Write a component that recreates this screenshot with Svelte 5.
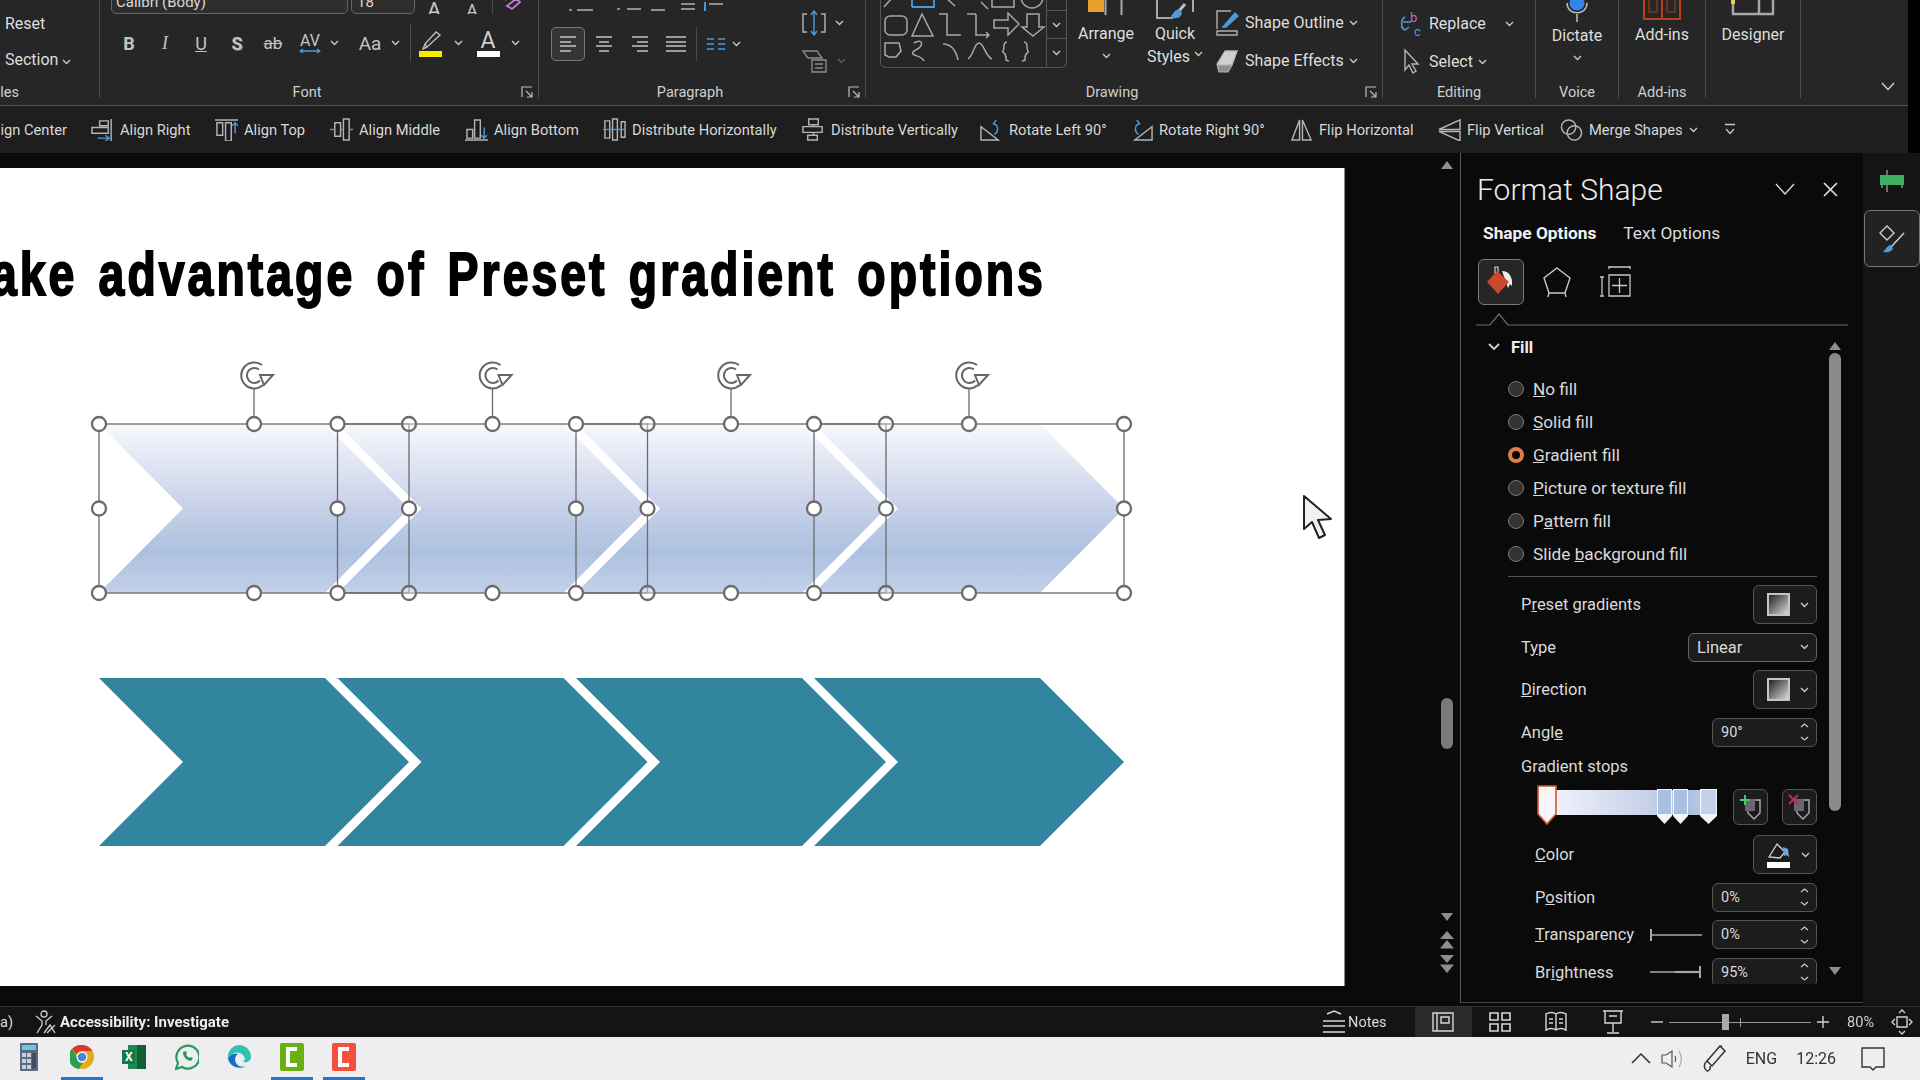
<script lang="ts">
	const g = '#b4b4b4';
	const b = '#4b9bdc';

	// x of each item's icon is the width of the item before it
	const qatItems = [
		{ label: 'Align Right', width: 124, icon: [['M9 3h9v5H9zM1 10h17v6H1zM21 1v23', g], ['M7 21h12m-4-3 4 3-4 3', b]] },
		{ label: 'Align Top', width: 115, icon: [['M0 2h24M2 5h6v13H2zM11 5h6v19h-6z', g], ['M21 16V5m-3 3 3-3 3 3', b]] },
		{ label: 'Align Middle', width: 135, icon: [['M5 5h6v14H5zM14 1h6v22h-6z', g], ['M0 12h5M11 12h3M20 12h4', b]] },
		{ label: 'Align Bottom', width: 138, icon: [['M0 23h24M2 12h6v9H2zM10 2h6v19h-6z', g], ['M20 10v11m-3-3 3 3 3-3', b]] },
		{ label: 'Distribute Horizontally', width: 199, icon: [['M2 3h5v18H2zM10 1h5v22h-5zM19 4h4v16h-4z', g], ['M0 12h24', b]] },
		{ label: 'Distribute Vertically', width: 178, icon: [['M7 1h10v6H7zM1 9h20v6H1zM6 18h10v5H6zM12 7v2M12 15v3', g]] },
		{ label: 'Rotate Left 90°', width: 150, icon: [['M1 23V9l18 14z', g], ['M15 17c4-2 5-8 0-11h-1m3-4-3 4 4 2', b]] },
		{ label: 'Rotate Right 90°', width: 160, icon: [['M23 23V9L5 23z', g], ['M9 17C5 15 4 9 9 6h1M7 2l3 4-4 2', b]] },
		{ label: 'Flip Horizontal', width: 148, icon: [['M10 2v21H2zM13 2v21h9z', g]] },
		{ label: 'Flip Vertical', width: 122, icon: [['M23 2v10H1zM23 14v10L1 14z', g]] },
		{ label: 'Merge Shapes', width: 164, chevron: true, icon: [['M9 2a7.500 7.500 0 1 1 0 15 7.500 7.500 0 0 1 0-15zM15 8a7.500 7.500 0 1 1 0 15 7.500 7.500 0 0 1 0-15z', g]] },
	];

	const fills = ['No fill', 'Solid fill', 'Gradient fill', 'Picture or texture fill', 'Pattern fill', 'Slide background fill'];
	// index of the access key letter in each label
	const fillKeys = [0, 0, 0, 0, 1, 6];

	const stops = [
		{ x: 120, w: 15, c: '#a8c0e2' },
		{ x: 136, w: 15, c: '#a8c0e2' },
		{ x: 163, w: 17, c: '#c3d2ea' },
	];

	const chevrons = [99, 337.5, 576, 814];
	const shapeW = 310;
	const depth = 84;

	function chevronPoints(x: number, y: number, h: number) {
		const r = x + shapeW;
		return `${x},${y} ${r - depth},${y} ${r},${y + h / 2} ${r - depth},${y + h} ${x},${y + h} ${x + depth},${y + h / 2}`;
	}

	const handleXs = [0, 155, 310];
</script>

{#snippet icon(paths: string[][], size = 23)}
	<svg class="ico" width={size} height={size} viewBox="0 0 24 24" fill="none" stroke-width="1.5">
		{#each paths as p}<path d={p[0]} stroke={p[1]} />{/each}
	</svg>
{/snippet}

{#snippet chev(w = 9)}
	<svg class="chev" width={w} height="6" viewBox="0 0 9 6" fill="none"><path d="M1 1l3.500 3.500L8 1" stroke="#c8c8c8" stroke-width="1.4" /></svg>
{/snippet}

{#snippet launcher()}
	<svg class="launcher" width="12" height="12" viewBox="0 0 12 12" fill="none" stroke="#bdbdbd" stroke-width="1.2"><path d="M1 11V1h10M5 5l6 6M11 6v5H6" /></svg>
{/snippet}

{#snippet spin(value: string)}
	<div class="spin">
		<span>{value}</span>
		<svg width="9" height="20" viewBox="0 0 9 20" fill="none" stroke="#c8c8c8" stroke-width="1.2"><path d="M1 5l3.500-3L8 5M1 15l3.500 3L8 15" /></svg>
	</div>
{/snippet}

{#snippet swatchBtn()}
	<div class="swatch-btn"><i class="swatch"></i>{@render chev()}</div>
{/snippet}

<div class="screen">
	<header class="ribbon">
		<section class="group g-slides">
			<div class="stack">
				<div class="t">Reset</div>
				<div class="t">Section {@render chev()}</div>
			</div>
			<div class="glabel clipped">Styles</div>
		</section>

		<section class="group g-font">
			<div class="font-row1">
				<div class="combo font-name">Calibri (Body)</div>
				<div class="combo font-size">18</div>
				<span class="grow">A</span>
				<span class="grow shrink">A</span>
				<i class="vsep"></i>
				<svg width="24" height="24" viewBox="0 0 24 24" fill="none" stroke="#c77ad6" stroke-width="1.8"><path d="M5 10l12-9M7 16l9-7 4 3-8 7z" /></svg>
			</div>
			<div class="font-row2">
				<span class="fmt bold">B</span>
				<span class="fmt ital">I</span>
				<span class="fmt under">U</span>
				<span class="fmt shadow">S</span>
				<span class="fmt strike">ab</span>
				<span class="fmt av">AV<svg width="22" height="6" viewBox="0 0 22 6" fill="none" stroke={b} stroke-width="1.3"><path d="M1 3h20M4 1 1 3l3 2M18 1l3 2-3 2" /></svg></span>
				{@render chev()}
				<span class="fmt aa">Aa</span>
				{@render chev()}
				<i class="vsep tall"></i>
				<span class="hilite">
					<svg width="24" height="21" viewBox="0 0 24 21" fill="none" stroke="#b9b9b9" stroke-width="1.4"><path d="M6 14l2 3-4 2zM6 14 17 2l4 3-13 12" /></svg>
					<i style="background:#f5ea00"></i>
				</span>
				{@render chev()}
				<span class="hilite colour">
					<span class="acolour">A</span>
					<i style="background:#fff"></i>
				</span>
				{@render chev()}
			</div>
			<div class="glabel lft">Font</div>
			{@render launcher()}
		</section>

		<section class="group g-para">
			<div class="para-main">
				<div class="para-top">
					<svg width="190" height="13" viewBox="0 0 190 13" fill="none" stroke="#b4b4b4" stroke-width="1.5"><path d="M12 8h16M62 7h14M86 8h14M116 2h14M116 7h14M144 2h14" /><path d="M4 8h3M52 7h3M140 0v9" stroke={b} stroke-width="2" /></svg>
				</div>
				<div class="para-row2">
					<span class="al active"><svg width="20" height="20" viewBox="0 0 20 20" stroke="#c4c4c4" stroke-width="1.6"><path d="M2 3h16M2 8h11M2 12h16M2 17h11" /></svg></span>
					<span class="al"><svg width="20" height="20" viewBox="0 0 20 20" stroke="#c4c4c4" stroke-width="1.6"><path d="M2 3h16M5 8h10M2 12h16M5 17h10" /></svg></span>
					<span class="al"><svg width="20" height="20" viewBox="0 0 20 20" stroke="#c4c4c4" stroke-width="1.6"><path d="M2 3h16M7 8h11M2 12h16M7 17h11" /></svg></span>
					<span class="al"><svg width="20" height="20" viewBox="0 0 20 20" stroke="#c4c4c4" stroke-width="1.6"><path d="M0 3h20M0 8h20M0 12h20M0 17h20" /></svg></span>
					<i class="vsep tall"></i>
					<svg class="cols" width="20" height="14" viewBox="0 0 20 14" stroke={b} stroke-width="1.6"><path d="M1 2h7M1 7h7M1 12h7M12 2h7M12 7h7M12 12h7" /></svg>
					{@render chev()}
				</div>
			</div>
			<div class="para-side">
				<div class="side-row">
					<svg width="24" height="26" viewBox="0 0 24 26" fill="none" stroke="#b4b4b4" stroke-width="1.4"><path d="M5 4H1v18h4M19 4h4v18h-4" /><path d="M12 1v24M9 5l3-4 3 4M9 21l3 4 3-4" stroke={b} /></svg>
					{@render chev()}
				</div>
				<div class="side-row dim">
					<svg width="26" height="24" viewBox="0 0 26 24" fill="none" stroke="#8a8a8a" stroke-width="1.4"><path d="M1 2h14l5 7H6zM10 11h14v12H10zM13 15h8M13 19h8" /></svg>
					{@render chev()}
				</div>
			</div>
			<div class="glabel lft">Paragraph</div>
			{@render launcher()}
		</section>

		<section class="group g-draw">
			<div class="draw-row">
				<div class="gallery">
					<svg width="165" height="68" viewBox="0 0 165 68" fill="none" stroke="#a8a8a8" stroke-width="1.5">
						<path d="M3 7l8-9M32 5h-1M64-3l10 9M100 2l7 7M111-6h22v13h-22zM140-3a11 11 0 0 0 22 0" />
						<path d="M31 7h22V-6M31 7V-6" stroke={b} stroke-width="1.8" />
						<rect x="4" y="16" width="22" height="19" rx="5" />
						<path d="M31 38l10-22 11 22zM58 16h8v21h14M95 16v21h13m-3-3 3 3-3 3M86 16h9M113 22h14v-7l11 11-11 11v-7h-14zM146 16h12v13h5l-11 9-11-9h5z" transform="translate(0 -2)" />
						<g transform="translate(0 -7)">
							<path d="M4 50h14l2 8-5 6H8l-4-2zM33 50c8-5 12 2 0 8-6 5 8 4 10 10M62 51c8 0 13 7 15 16M87 66c6-4 6-16 11-16s6 13 13 16M126 49c-5 0-2 8-4 9s4 1 3 9c0 0 2 1 3 1M143 49c5 0 2 8 4 9s-4 1-3 9c0 0-2 1-3 1" />
						</g>
					</svg>
					<div class="gal-scroll">
						<span>{@render chev()}</span>
						<span class="more">{@render chev()}</span>
					</div>
				</div>
				<div class="big arrange">
					<svg width="36" height="15" viewBox="0 0 36 15"><rect x="0" y="-6" width="16" height="18" fill="#eb9f2c" /><rect x="17.500" y="-2" width="16" height="18" fill="none" stroke="#aaa" stroke-width="2" /></svg>
					<div class="t">Arrange</div>
					{@render chev()}
				</div>
				<div class="big quick">
					<svg width="40" height="19" viewBox="0 0 40 19" fill="none"><path d="M2-2v20h16" stroke="#aaa" stroke-width="2" /><path d="M38-2v14" stroke="#aaa" stroke-width="2" /><path d="M30 4 24 11" stroke="#c0c0c0" stroke-width="3" /><path d="M24 9c-5 1-6 5-9 9 6 1 11 0 12-5z" fill={b} /></svg>
					<div class="t">Quick</div>
					<div class="t styles">Styles {@render chev()}</div>
				</div>
				<div class="shape-cmds">
					<div class="cmd">
						<svg width="24" height="28" viewBox="0 0 24 28" fill="none" stroke="#b0b0b0" stroke-width="1.4"><path d="M2 20V2h14M2 22h20v4H2z" /><path d="M8 18 20 4l3 3-12 11z" fill={b} stroke={b} /></svg>
						<span class="t">Shape Outline</span>{@render chev()}
					</div>
					<div class="cmd">
						<svg width="24" height="26" viewBox="0 0 24 26" stroke="#b0b0b0" stroke-width="1.2"><path d="M2 16 10 3h12l-5 14-4 7H4z" fill="#8e8e8e" /><path d="M10 3h12l-5 14H2" fill="#cfcfcf" /></svg>
						<span class="t">Shape Effects</span>{@render chev()}
					</div>
				</div>
			</div>
			<div class="glabel lft">Drawing</div>
			{@render launcher()}
		</section>

		<section class="group g-edit">
			<div class="cmd">
				<svg width="24" height="26" viewBox="0 0 24 26" fill="none" stroke={b} stroke-width="1.5"><path d="M6 6C1 9 2 17 6 19M2 16l4 3 4-3M4 11h8" /><text x="11" y="11" fill="#c06dd6" stroke="none" font-size="13" font-family="Roboto, sans-serif">b</text><text x="15" y="25" fill={b} stroke="none" font-size="13" font-family="Roboto, sans-serif">c</text></svg>
				<span class="t">Replace</span><span class="replace-chev">{@render chev()}</span>
			</div>
			<div class="cmd">
				<svg width="24" height="28" viewBox="0 0 24 28" fill="none" stroke="#b4b4b4" stroke-width="1.4"><path d="M6 2v20l4-5 4 8 3-2-4-7h6z" /></svg>
				<span class="t">Select</span>{@render chev()}
			</div>
			<div class="glabel">Editing</div>
		</section>

		<section class="group g-voice">
			<svg width="24" height="22" viewBox="0 0 24 22" fill="none"><circle cx="12" cy="3" r="7.500" fill="#2f86e6" /><path d="M2 3c0 13 20 13 20 0M12 14v8" stroke="#b8b8b8" stroke-width="1.6" /></svg>
			<div class="t">Dictate</div>
			{@render chev()}
			<div class="glabel">Voice</div>
		</section>

		<section class="group g-addin">
			<svg width="42" height="21" viewBox="0 0 42 21" fill="none" stroke="#b8401f" stroke-width="2"><path d="M3-4v23h36V-4M21-4v23" /><path d="M8-4v16h8V-4M26-4v16h8V-4" stroke="#70301f" /></svg>
			<div class="t">Add-ins</div>
			<div class="glabel">Add-ins</div>
		</section>

		<section class="group g-designer">
			<svg width="44" height="16" viewBox="0 0 44 16" fill="none" stroke="#a8a8a8" stroke-width="2.400"><path d="M2 0v14h40V0M28 0v14" /><rect x="0" y="0" width="4" height="4" fill="#eecb5d" stroke="none" /></svg>
			<div class="t">Designer</div>
		</section>

		<svg class="collapse" width="14" height="9" viewBox="0 0 14 9" fill="none" stroke="#d0d0d0" stroke-width="1.400"><path d="M1 1l6 6.500L13 1" /></svg>
	</header>

	<nav class="qat">
		<div class="qat-first"><span>Align Center</span></div>
		{#each qatItems as item}
			<div class="qat-item" style="width:{item.width}px">
				{@render icon(item.icon)}
				<span>{item.label}</span>
				{#if item.chevron}{@render chev()}{/if}
			</div>
		{/each}
		<svg class="qat-more" width="12" height="13" viewBox="0 0 12 13" fill="none" stroke="#c8c8c8" stroke-width="1.300"><path d="M1 1.500h10M2 6l4 4.500L10 6" /></svg>
	</nav>

	<main class="work">
		<div class="canvas">
			<div class="slide">
				<h1 class="title"><span>Take advantage of Preset gradient options</span></h1>
				<svg class="diagram" width="1344" height="620" viewBox="0 360 1344 620">
					<defs>
						<linearGradient id="fillGrad" x1="0" y1="0" x2="0" y2="1">
							<stop offset="0" stop-color="#f8f8fd" />
							<stop offset="0.5" stop-color="#c6d0e8" />
							<stop offset="0.76" stop-color="#adc1df" />
							<stop offset="1" stop-color="#c3d0e9" />
						</linearGradient>
					</defs>
					{#each chevrons as x}
						<polygon points={chevronPoints(x, 424, 169)} fill="url(#fillGrad)" />
						<polygon points={chevronPoints(x, 678, 168)} fill="#31859f" />
					{/each}
					{#each chevrons as x}
						<rect x={x} y="424" width={shapeW} height="169" fill="none" stroke="#6b6b6b" stroke-width="1.300" />
						<line x1={x + 155} y1="389" x2={x + 155} y2="424" stroke="#6b6b6b" stroke-width="1.300" />
						<g transform="translate({x + 155} 375)" fill="none" stroke="#666" stroke-width="2">
							<path d="M8-10A13 13 0 1 0 9 10" />
							<path d="M5-5.500a7.500 7.500 0 1 0 1 11" />
							<path d="M6 0h13L10 10z" fill="#fff" />
						</g>
					{/each}
					{#each chevrons as x}
						{#each handleXs as dx}
							{#each [424, 508.500, 593] as y}
								{#if !(dx === 155 && y === 508.500)}
									<circle cx={x + dx} cy={y} r="7" fill="#fff" fill-opacity={dx === 310 && x < 814 && y !== 508.500 ? 0.4 : 1} stroke="#6b6b6b" stroke-width="2.300" />
								{/if}
							{/each}
						{/each}
					{/each}
					<path d="M1304 496v33l8-7 7 16 6-3-7-15 13-1z" fill="#f1f1f3" stroke="#222" stroke-width="2" stroke-linejoin="round" />
				</svg>
			</div>
		</div>

		<div class="vscroll">
			<i class="up"></i>
			<i class="thumb"></i>
			<i class="down"></i>
			<svg class="dbl" width="14" height="18" viewBox="0 0 14 18" fill="#8e8e8e"><path d="M7 0l7 8H0zM7 9l7 8.500H0z" /></svg>
			<svg class="dbl dn" width="14" height="18" viewBox="0 0 14 18" fill="#8e8e8e"><path d="M0 0h14L7 8zM0 9.500h14L7 18z" /></svg>
		</div>

		<aside class="pane">
			<div class="pane-head">
				<h2>Format Shape</h2>
				<svg width="20" height="12" viewBox="0 0 20 12" fill="none" stroke="#d8d8d8" stroke-width="1.400"><path d="M1 1l9 10 9-10" /></svg>
				<svg width="15" height="15" viewBox="0 0 15 15" fill="none" stroke="#e4e4e4" stroke-width="1.600"><path d="M1 1l13 13M14 1 1 14" /></svg>
			</div>
			<div class="pane-tabs"><b>Shape Options</b><span>Text Options</span></div>
			<div class="pane-icons">
				<span class="tab-btn">
					<svg width="32" height="32" viewBox="0 0 32 32"><path d="M10 1h3v6h-3z" fill="none" stroke="#ccc" stroke-width="1.200" /><path d="M17 5c7 0 11 6 10 15l-2-2-2 4" fill="#eee" /><path d="M12 5l12 11-11 12L2 16z" fill="#c9472b" /></svg>
				</span>
				<svg class="pent" width="28" height="32" viewBox="0 0 28 32" fill="none" stroke="#c8c8c8" stroke-width="1.400"><path d="M14 2l13 10-5 15H6L1 12zM5 31l1-4M23 31l-1-4M6 27h16" /></svg>
				<svg class="size" width="32" height="32" viewBox="0 0 32 32" fill="none" stroke="#c8c8c8" stroke-width="1.300"><path d="M10 1h21M10-1v4M31-1v4M10 9h21v21H10zM20.500 12v15M13 19.500h15M1 11h4M1 30h4M3 11v19" /></svg>
			</div>
			<svg class="pane-line" width="372" height="13" viewBox="0 0 372 13" fill="none" stroke="#6d6d6d" stroke-width="1.200"><path d="M0 12h14l9-11 9 11h340" /></svg>

			<div class="pane-body">
				<div class="props">
					<div class="fill-head">
						<svg width="12" height="8" viewBox="0 0 12 8" fill="none" stroke="#d0d0d0" stroke-width="1.800"><path d="M1 1l5 5 5-5" /></svg>
						<b>Fill</b>
					</div>
					<ul class="fills">
						{#each fills as label, i}
							<li>
								<i class="radio" class:on={i === 2}></i>
								<span>{label.slice(0, fillKeys[i])}<u>{label[fillKeys[i]]}</u>{label.slice(fillKeys[i] + 1)}</span>
							</li>
						{/each}
					</ul>
					<div class="fill-rule"></div>

					<div class="rows">
						<div class="row h39"><span>P<u>r</u>eset gradients</span>{@render swatchBtn()}</div>
						<div class="row h29"><span>T<u>y</u>pe</span><div class="select"><span>Linear</span>{@render chev()}</div></div>
						<div class="row h39"><span><u>D</u>irection</span>{@render swatchBtn()}</div>
						<div class="row h29"><span>Angl<u>e</u></span>{@render spin('90°')}</div>
						<div class="stops-label">Gradient stops</div>
						<div class="row h39 stops-row">
							<div class="stops">
								<i class="stops-bar"></i>
								{#each stops as s}
									<svg class="stop" style="left:{s.x}px" width={s.w} height="35" viewBox="0 0 15 35" preserveAspectRatio="none"><path d="M0 0h15v27l-7.500 8L0 27z" fill="#f2f5fb" /><path d="M1 1h13v24H1z" fill={s.c} /></svg>
								{/each}
								<svg class="stop" style="left:0;top:-3px" width="20" height="41" viewBox="0 0 20 41"><path d="M1 1h18v28l-9 10-9-10z" fill="#f6f4f8" stroke="#d4571f" stroke-width="1.600" /></svg>
							</div>
							<span class="stop-btn">
								<svg width="24" height="28" viewBox="0 0 24 28" fill="none"><path d="M9 7h12v13l-6 6-6-6z" stroke="#b0b0b0" stroke-width="1.400" /><path d="M6 6h10v12H6z" fill="#6e6470" /><path d="M1 7h10M6 2v10" stroke="#4fc66a" stroke-width="2" /></svg>
							</span>
							<span class="stop-btn">
								<svg width="24" height="28" viewBox="0 0 24 28" fill="none"><path d="M9 7h12v13l-6 6-6-6z" stroke="#b0b0b0" stroke-width="1.400" /><path d="M6 6h10v12H6z" fill="#6e6470" /><path d="M1 2l9 9M10 2l-9 9" stroke="#c22c52" stroke-width="2" /></svg>
							</span>
						</div>
						<div class="row h39 sub">
							<span><u>C</u>olor</span>
							<div class="swatch-btn">
								<svg class="bucket" width="24" height="28" viewBox="0 0 24 28"><path d="M2 16 10 3l8 8-5 6z" fill="none" stroke="#cfcfcf" stroke-width="1.400" /><path d="M16 6l5 2 1 8-3-2-2 1z" fill="#6aa8e0" /><rect x="0" y="21" width="23" height="6" fill="#fff" /></svg>
								{@render chev()}
							</div>
						</div>
						<div class="row h29 sub"><span>P<u>o</u>sition</span>{@render spin('0%')}</div>
						<div class="row h29 sub">
							<span><u>T</u>ransparency</span>
							<svg class="slider" width="52" height="14" viewBox="0 0 52 14" stroke="#a8a8a8" stroke-width="1.300"><path d="M1 1v12" stroke-width="2" /><path d="M1 7h51" /></svg>
							{@render spin('0%')}
						</div>
						<div class="row h29 sub">
							<span>Br<u>i</u>ghtness</span>
							<svg class="slider" width="52" height="14" viewBox="0 0 52 14" stroke="#a8a8a8" stroke-width="1.300"><path d="M50 1v12" stroke-width="2" /><path d="M0 7h51" /><path d="M25 7h25" stroke-width="2.200" /></svg>
							{@render spin('95%')}
						</div>
					</div>
				</div>
				<div class="pane-scroll">
					<i class="up"></i>
					<i class="thumb"></i>
					<i class="down"></i>
				</div>
			</div>
		</aside>

		<div class="strip">
			<svg class="strip-green" width="26" height="22" viewBox="0 0 26 22" stroke="#c8c8c8" stroke-width="1"><path d="M8 0v22M3 15v3M23 15v3" /><rect x="1" y="5" width="24" height="10" fill="#3fae62" stroke="none" /></svg>
			<span class="strip-btn">
				<svg width="28" height="32" viewBox="0 0 28 32" fill="none"><path d="M2 10l7-7 7 7-7 7z" stroke="#d0d0d0" stroke-width="1.400" /><path d="M26 10 13 24" stroke="#c8c8c8" stroke-width="1.600" /><path d="M12 22c-3 1-4 4-7 7 5 1 9 0 10-4z" fill={b} /></svg>
			</span>
		</div>
	</main>

	<footer class="status">
		<span class="st-cut">a)</span>
		<svg class="st-acc" width="22" height="24" viewBox="0 0 22 24" fill="none" stroke="#d0d0d0" stroke-width="1.300"><circle cx="10" cy="4" r="3" /><path d="M2 6l6 5v4l-5 8M18 6l-6 5v4M10 23l6-8 5 8M13 23l8-8" /></svg>
		<b>Accessibility: Investigate</b>
		<div class="st-right">
			<span class="notes">
				<svg width="22" height="24" viewBox="0 0 22 24" fill="none" stroke="#d8d8d8" stroke-width="1.400"><path d="M4 4l7-3 7 3M0 11h22M0 16h22M0 22h22" /></svg>
				Notes
			</span>
			<span class="view active"><svg width="22" height="20" viewBox="0 0 22 20" fill="none" stroke="#d8d8d8" stroke-width="1.400"><path d="M1 1h20v18H1zM5 1v18M9 5h8v6H9z" /></svg></span>
			<span class="view"><svg width="22" height="20" viewBox="0 0 22 20" fill="none" stroke="#d8d8d8" stroke-width="1.600"><path d="M1 1h8v7H1zM13 1h8v7h-8zM1 12h8v7H1zM13 12h8v7h-8z" /></svg></span>
			<span class="view"><svg width="22" height="22" viewBox="0 0 22 22" fill="none" stroke="#d8d8d8" stroke-width="1.400"><path d="M1 3c4-2 7-2 10 0 3-2 6-2 10 0v16c-4-2-7-2-10 0-3-2-6-2-10 0zM11 3v16M4 8h4M4 12h4M14 8h4M14 12h4" /></svg></span>
			<span class="view"><svg width="22" height="24" viewBox="0 0 22 24" fill="none" stroke="#d8d8d8" stroke-width="1.400"><path d="M1 1h20M3 1v12h16V1M11 13v9M5 23h12M7 6h8" /></svg></span>
			<div class="zoom">
				<svg width="12" height="2" viewBox="0 0 12 2" stroke="#d0d0d0" stroke-width="1.400"><path d="M0 1h12" /></svg>
				<div class="zoom-track"><i class="zoom-mark"></i><i class="zoom-thumb"></i></div>
				<svg width="12" height="12" viewBox="0 0 12 12" stroke="#d0d0d0" stroke-width="1.400"><path d="M0 6h12M6 0v12" /></svg>
				<span>80%</span>
				<svg class="fit" width="22" height="26" viewBox="0 0 22 26" fill="none" stroke="#d0d0d0" stroke-width="1.400"><path d="M6 8h10v10H6zM8 4l3-3 3 3M8 22l3 3 3-3M4 10l-3 3 3 3M18 10l3 3-3 3" /></svg>
			</div>
		</div>
	</footer>

	<div class="taskbar">
		<div class="apps">
			<span class="app">
				<svg width="18" height="28" viewBox="0 0 18 28"><rect width="18" height="28" rx="1" fill="#5b6c80" /><rect x="2" y="2" width="14" height="5" fill="#6cc8dd" /><path d="M2 10h4v4H2zM7 10h4v4H7zM2 16h4v4H2zM7 16h4v4H7zM2 22h4v4H2zM7 22h4v4H7z" fill="#c8d0d8" /><path d="M12 10h4v16h-4z" fill="#3e4e60" /></svg>
			</span>
			<span class="app active">
				<svg width="24" height="28" viewBox="0 0 24 24"><circle cx="12" cy="12" r="12" fill="#e2ad1d" /><path d="M12 0a12 12 0 0 1 10.400 6H12a6 6 0 0 0-5.400 3.400L2 3.800A12 12 0 0 1 12 0z" fill="#d8392b" /><path d="M2 3.800l5 8.200a5 5 0 0 0 5.600 6L9 24A12 12 0 0 1 2 3.800z" fill="#2d9e4c" /><circle cx="12" cy="12" r="5.500" fill="#fff" /><circle cx="12" cy="12" r="4.300" fill="#4a86e0" /></svg>
			</span>
			<span class="app">
				<svg width="24" height="26" viewBox="0 0 24 26"><rect x="6" y="1" width="18" height="24" rx="1" fill="#1e8a4f" /><path d="M15 1h9v24h-9z" fill="#115e34" /><rect x="0" y="6" width="13" height="14" fill="#107c41" /><text x="3" y="17" font-size="12" font-weight="700" fill="#fff" font-family="Roboto, sans-serif">X</text></svg>
			</span>
			<span class="app">
				<svg width="24" height="28" viewBox="0 0 24 28" fill="none"><path d="M1 26l2-6A11.500 11.500 0 1 1 7 24z" stroke="#2a9a5a" stroke-width="2.200" /><path d="M8 9c0 5 3 8 8 9l2-3-3-1-1 1c-1-1-2-2-3-3l1-1-1-3z" fill="#2a9a5a" /></svg>
			</span>
			<span class="app">
				<svg width="24" height="28" viewBox="0 0 24 24"><path d="M12 0a12 12 0 0 1 12 12c0 4-4 6-8 5 3-2 2-7-3-9S3 10 1 14A12 12 0 0 1 12 0z" fill="#36c0b0" /><path d="M1 14c2-5 6-6 10-5-4 2-4 9 1 12 3 1 5 1 7 0a12 12 0 0 1-18-7z" fill="#1a6fc4" /></svg>
			</span>
			<span class="app active">
				<svg width="24" height="28" viewBox="0 0 24 28"><rect width="24" height="28" rx="2" fill="#6ab010" /><path d="M17 6H8v16h9" fill="none" stroke="#fff" stroke-width="4" /></svg>
			</span>
			<span class="app active">
				<svg width="24" height="28" viewBox="0 0 24 28"><rect width="24" height="28" rx="2" fill="#f4513a" /><path d="M17 6H8v16h9" fill="none" stroke="#fff" stroke-width="4" /></svg>
			</span>
		</div>
		<div class="tray">
			<svg width="20" height="11" viewBox="0 0 20 11" fill="none" stroke="#333" stroke-width="1.500"><path d="M1 10l9-9 9 9" /></svg>
			<svg width="24" height="20" viewBox="0 0 24 20" fill="none" stroke="#555" stroke-width="1.200"><path d="M1 6h4l6-4v16l-6-4H1zM14 7c1 2 1 4 0 6" /><path d="M18 2c3 5 3 11 0 16" stroke="#aaa" /></svg>
			<svg width="24" height="28" viewBox="0 0 24 28" fill="none" stroke="#333" stroke-width="1.500"><path d="M17 1l5 5L9 21l-5-5zM4 16c-4 3-3 8 0 10 2 0 4-2 3-5M16 2l3-1" /></svg>
			<span class="tray-t eng">ENG</span>
			<span class="tray-t">12:26</span>
			<svg class="note" width="24" height="24" viewBox="0 0 24 24" fill="none" stroke="#333" stroke-width="1.400"><path d="M1 1h22v19h-8l-3 3-3-3H1z" /></svg>
		</div>
	</div>
</div>

<style>
	:global(body) {
		margin: 0;
		background: #000;
	}

	.screen {
		width: 1920px;
		height: 1080px;
		overflow: hidden;
		display: flex;
		flex-direction: column;
		font-family: Roboto, 'Noto Sans', sans-serif;
		color: #dcdcdc;
		filter: blur(0.45px);
	}

	svg {
		flex: none;
	}

	i {
		display: block;
	}

	/* ribbon */
	.ribbon {
		position: relative;
		height: 106px;
		width: 1908px;
		flex: none;
		display: flex;
		background: #262626;
		border-bottom: 1px solid #555;
		box-sizing: border-box;
		overflow: hidden;
	}

	.group {
		position: relative;
		height: 98px;
		flex: none;
		box-sizing: border-box;
		border-right: 1px solid #4a4a4a;
		display: flex;
		flex-direction: column;
	}

	.t {
		font-size: 16px;
		line-height: 20px;
		white-space: nowrap;
		color: #dedede;
	}

	.glabel {
		position: absolute;
		left: 0;
		right: 0;
		bottom: -3px;
		text-align: center;
		font-size: 14.500px;
		line-height: 16px;
		color: #cfcfcf;
	}

	.glabel.lft {
		right: 24px;
	}

	.glabel.clipped {
		left: -20px;
		right: auto;
	}

	.launcher {
		position: absolute;
		right: 5px;
		bottom: 0;
	}

	.vsep {
		width: 1px;
		height: 28px;
		background: #4a4a4a;
	}

	.g-slides {
		width: 100px;
		padding: 14px 0 0 5px;
	}

	.g-slides .stack {
		display: flex;
		flex-direction: column;
		gap: 16px;
	}

	.g-font {
		width: 439px;
		padding-left: 11px;
	}

	.font-row1 {
		margin-top: -18px;
		height: 32px;
		display: flex;
		align-items: flex-end;
	}

	.combo {
		height: 32px;
		box-sizing: border-box;
		border: 1px solid #666;
		border-radius: 5px;
		font-size: 15px;
		line-height: 38px;
		padding-left: 4px;
		background: #2e2e2e;
		color: #d8d8d8;
	}

	.font-name {
		width: 237px;
	}

	.font-size {
		width: 64px;
		margin-left: 3px;
		padding-left: 5px;
	}

	.grow {
		width: 38px;
		text-align: center;
		font-size: 21px;
		line-height: 20px;
		height: 14px;
		overflow: hidden;
		color: #c8c8c8;
	}

	.grow.shrink {
		font-size: 17px;
	}

	.font-row1 .vsep {
		height: 14px;
		margin: 0 7px 0 1px;
	}

	.font-row2 {
		margin-top: 13px;
		height: 32px;
		display: flex;
		align-items: center;
	}

	.fmt {
		color: #c4c4c4;
		font-size: 18px;
		width: 36px;
		text-align: center;
	}

	.fmt.bold {
		font-weight: 700;
	}

	.fmt.ital {
		font-style: italic;
		font-family: 'Liberation Serif', serif;
	}

	.fmt.under {
		text-decoration: underline;
	}

	.fmt.shadow {
		font-weight: 700;
		text-shadow: 1px 1px 1px #666;
	}

	.fmt.strike {
		text-decoration: line-through;
		font-size: 17px;
	}

	.fmt.av {
		width: 38px;
		display: flex;
		flex-direction: column;
		align-items: center;
		font-size: 16px;
		line-height: 15px;
	}

	.fmt.aa {
		font-size: 19px;
		width: 40px;
		margin-left: 11px;
	}

	.font-row2 .chev {
		margin-left: 1px;
	}

	.font-row2 .vsep.tall {
		height: 38px;
		margin: 0 8px 0 10px;
	}

	.hilite {
		width: 24px;
		display: flex;
		flex-direction: column;
		margin-right: 10px;
	}

	.hilite i {
		height: 6px;
		width: 23px;
	}

	.hilite.colour {
		margin-left: 13px;
		align-items: center;
	}

	.acolour {
		font-size: 23px;
		line-height: 21px;
		color: #d0d0d0;
	}

	.g-para {
		width: 327px;
		padding-left: 12px;
	}

	.para-main {
		width: 245px;
	}

	.para-top {
		height: 13px;
		margin-left: 14px;
		overflow: hidden;
	}

	.para-row2 {
		margin-top: 14px;
		height: 34px;
		display: flex;
		align-items: center;
	}

	.al {
		width: 34px;
		height: 34px;
		box-sizing: border-box;
		display: flex;
		align-items: center;
		justify-content: center;
		margin-right: 2px;
	}

	.al.active {
		border: 1px solid #777;
		border-radius: 5px;
		background: #353535;
	}

	.para-row2 .vsep.tall {
		height: 34px;
		margin: 0 9px 0 1px;
	}

	.para-row2 .chev {
		margin-left: 6px;
	}

	.para-side {
		position: absolute;
		left: 263px;
		top: 9px;
		display: flex;
		flex-direction: column;
		gap: 10px;
	}

	.side-row {
		display: flex;
		align-items: center;
		gap: 9px;
		height: 28px;
	}

	.side-row.dim .chev {
		opacity: 0.35;
	}

	.g-draw {
		width: 517px;
		padding-left: 14px;
	}

	.draw-row {
		display: flex;
	}

	.gallery {
		width: 187px;
		height: 68px;
		box-sizing: border-box;
		border: 1px solid #555;
		border-top: 0;
		border-radius: 0 0 6px 6px;
		display: flex;
	}

	.gal-scroll {
		margin-left: auto;
		width: 21px;
		border-left: 1px solid #555;
		display: flex;
		flex-direction: column;
	}

	.gal-scroll span {
		height: 28px;
		box-sizing: border-box;
		border-top: 1px solid #555;
		display: flex;
		align-items: center;
		justify-content: center;
		margin-top: 10px;
	}

	.gal-scroll .more {
		margin-top: 0;
		height: 29px;
	}

	.big {
		display: flex;
		flex-direction: column;
		align-items: center;
		flex: none;
	}

	.arrange {
		width: 78px;
	}

	.arrange .t {
		margin-top: 9px;
	}

	.arrange .chev {
		margin-top: 9px;
	}

	.quick {
		width: 60px;
	}

	.quick svg:first-child {
		margin-bottom: 5px;
	}

	.styles {
		margin-top: 3px;
	}

	.shape-cmds {
		padding-left: 10px;
	}

	.cmd {
		display: flex;
		align-items: center;
		gap: 6px;
		height: 28px;
		margin-top: 10px;
	}

	.cmd .chev {
		margin-left: -1px;
	}

	.shape-cmds .cmd:first-child {
		margin-top: 9px;
	}

	.g-edit {
		width: 153px;
		padding-left: 16px;
	}

	.replace-chev {
		margin-left: 14px;
		display: flex;
	}

	.g-voice,
	.g-addin,
	.g-designer {
		align-items: center;
	}

	.g-voice {
		width: 83px;
	}

	.g-voice .t {
		margin-top: 4px;
	}

	.g-voice .chev {
		margin-top: 9px;
	}

	.g-addin {
		width: 87px;
	}

	.g-addin .t {
		margin-top: 4px;
	}

	.g-designer {
		width: 95px;
	}

	.g-designer .t {
		margin-top: 9px;
	}

	.collapse {
		position: absolute;
		left: 1881px;
		top: 82px;
	}

	/* quick access strip */
	.qat {
		height: 47px;
		width: 1908px;
		flex: none;
		background: #1e1e1e;
		display: flex;
		align-items: center;
		font-size: 14.700px;
		color: #d8d8d8;
	}

	.qat-first {
		width: 91px;
		flex: none;
		display: flex;
		justify-content: flex-end;
		padding-right: 24px;
		box-sizing: border-box;
		white-space: nowrap;
	}

	.qat-item {
		flex: none;
		display: flex;
		align-items: center;
		gap: 6px;
		white-space: nowrap;
	}

	/* workspace */
	.work {
		height: 853px;
		flex: none;
		display: flex;
		background: #0a0a0a;
	}

	.canvas {
		width: 1437px;
		flex: none;
		padding-top: 15px;
		box-sizing: border-box;
	}

	.slide {
		width: 1345px;
		height: 818px;
		background: #fff;
		overflow: hidden;
		border-right: 1px solid #888;
		box-sizing: border-box;
	}

	.title {
		margin: 0;
		padding-top: 79px;
		height: 54px;
		display: flex;
		justify-content: flex-end;
		width: 1046px;
		white-space: nowrap;
		font-family: 'Liberation Sans', sans-serif;
		font-weight: 700;
		font-size: 61px;
		line-height: 54px;
		letter-spacing: 4px;
		word-spacing: 7px;
		color: #000;
	}

	.title span {
		display: block;
		flex: none;
		transform: scaleX(0.76);
		transform-origin: 100% 50%;
		-webkit-text-stroke: 2px #000;
	}

	.diagram {
		display: block;
		margin-top: 59px;
	}

	.vscroll {
		width: 23px;
		flex: none;
		display: flex;
		flex-direction: column;
		align-items: center;
		box-sizing: border-box;
		padding: 8px 3px 0 0;
	}

	.up {
		width: 0;
		height: 0;
		border: 6px solid transparent;
		border-top: 0;
		border-bottom: 8px solid #8e8e8e;
	}

	.down {
		width: 0;
		height: 0;
		border: 6px solid transparent;
		border-bottom: 0;
		border-top: 8px solid #8e8e8e;
	}

	.thumb {
		width: 12px;
		border-radius: 6px;
		background: #7a7a7a;
	}

	.vscroll .thumb {
		height: 51px;
		margin: 529px 0 164px;
	}

	.vscroll .dbl {
		margin-top: 10px;
	}

	.vscroll .dbl.dn {
		margin-top: 6px;
	}

	.pane {
		width: 403px;
		flex: none;
		height: 850px;
		box-sizing: border-box;
		border-left: 1px solid #555;
		border-bottom: 1px solid #444;
		display: flex;
		flex-direction: column;
		overflow: hidden;
	}

	.pane-head {
		margin-top: 14px;
		height: 44px;
		padding-left: 16px;
		flex: none;
		display: flex;
		align-items: center;
	}

	.pane-head h2 {
		margin: 0;
		width: 298px;
		font-size: 30px;
		font-weight: 300;
		color: #ececec;
	}

	.pane-head svg:last-child {
		margin-left: 28px;
	}

	.pane-tabs {
		margin-top: 11px;
		height: 22px;
		padding-left: 22px;
		flex: none;
		display: flex;
		gap: 27px;
		align-items: center;
		font-size: 17.300px;
	}

	.pane-tabs b {
		color: #f2f2f2;
	}

	.pane-icons {
		margin-top: 15px;
		height: 46px;
		padding-left: 17px;
		flex: none;
		display: flex;
		align-items: center;
	}

	.tab-btn {
		width: 46px;
		height: 46px;
		box-sizing: border-box;
		border: 1px solid #7a7a7a;
		border-radius: 6px;
		background: #262626;
		display: flex;
		align-items: center;
		justify-content: center;
	}

	.pent {
		margin-left: 19px;
	}

	.size {
		margin-left: 28px;
	}

	.pane-line {
		display: block;
		margin: 8px 0 0 15px;
		flex: none;
	}

	.pane-body {
		position: relative;
		height: 658px;
		flex: none;
		display: flex;
		overflow: hidden;
	}

	.props {
		width: 366px;
		flex: none;
		font-size: 16.500px;
		color: #dadada;
	}

	.fill-head {
		margin-top: 9px;
		height: 24px;
		padding-left: 27px;
		display: flex;
		align-items: center;
		gap: 11px;
	}

	.fill-head b {
		color: #efefef;
	}

	.fills {
		list-style: none;
		margin: 13.500px 0 0;
		padding: 0 0 0 47px;
		font-size: 17.200px;
	}

	.fills li {
		height: 33px;
		display: flex;
		align-items: center;
		gap: 9px;
	}

	.radio {
		width: 16px;
		height: 16px;
		box-sizing: border-box;
		border-radius: 50%;
		border: 1px solid #777;
		background: #333;
	}

	.radio.on {
		border: 4px solid #e07c44;
		background: #000;
	}

	.fill-rule {
		margin: 5.500px 0 0 47px;
		width: 309px;
		height: 1px;
		background: #555;
	}

	.rows {
		margin: 8px 0 0 47px;
		width: 309px;
		padding-left: 13px;
		box-sizing: border-box;
		display: flex;
		flex-direction: column;
		gap: 8.500px;
	}

	.row {
		display: flex;
		align-items: center;
		justify-content: space-between;
		flex: none;
	}

	.h39 {
		height: 39px;
	}

	.h29 {
		height: 29px;
	}

	.sub {
		padding-left: 14px;
	}

	.swatch-btn {
		width: 64px;
		height: 39px;
		box-sizing: border-box;
		border: 1px solid #555;
		border-radius: 6px;
		background: #1c1c1c;
		display: flex;
		align-items: center;
		padding-left: 13px;
		gap: 10px;
	}

	.swatch {
		width: 23px;
		height: 23px;
		box-sizing: border-box;
		border: 2px solid #c4c4c4;
		background: linear-gradient(135deg, #222, #d8d8d8);
	}

	.select {
		width: 129px;
		height: 29px;
		box-sizing: border-box;
		border: 1px solid #666;
		border-radius: 6px;
		background: #1c1c1c;
		display: flex;
		align-items: center;
		justify-content: space-between;
		padding: 0 7px 0 8px;
	}

	.spin {
		width: 105px;
		height: 29px;
		flex: none;
		box-sizing: border-box;
		border: 1px solid #555;
		border-radius: 6px;
		background: #1c1c1c;
		display: flex;
		align-items: center;
		justify-content: space-between;
		padding: 0 7px 0 8px;
		font-size: 14.500px;
	}

	.slider {
		margin-left: auto;
		margin-right: 10px;
	}

	.stops-label {
		height: 24px;
		line-height: 24px;
	}

	.stops-row {
		justify-content: flex-start;
	}

	.stops {
		position: relative;
		width: 180px;
		height: 39px;
		margin-left: 16px;
	}

	.stops-bar {
		position: absolute;
		left: 10px;
		right: 0;
		top: 2px;
		height: 25px;
		background: linear-gradient(90deg, #f4f4fc, #c6d0e8 60%, #adc1df 85%, #c3d0e9);
	}

	.stop {
		position: absolute;
		top: 1px;
	}

	.stop-btn {
		width: 35px;
		height: 36px;
		box-sizing: border-box;
		border: 1px solid #555;
		border-radius: 6px;
		background: #1c1c1c;
		display: flex;
		align-items: center;
		justify-content: center;
		margin-left: 14px;
	}

	.stops + .stop-btn {
		margin-left: 17px;
	}

	.pane-scroll {
		flex: none;
		width: 14px;
		margin-left: 1px;
		padding-top: 16px;
		display: flex;
		flex-direction: column;
		align-items: center;
		gap: 3px;
	}

	.pane-scroll .thumb {
		height: 458px;
		background: #8a8a8a;
	}

	.pane-scroll .down {
		margin-top: 153px;
	}

	.strip {
		flex: 1;
		background: #141414;
		display: flex;
		flex-direction: column;
		align-items: center;
		padding-top: 17px;
	}

	.strip-btn {
		margin-top: 18px;
		width: 56px;
		height: 57px;
		box-sizing: border-box;
		border: 1px solid #777;
		border-radius: 6px;
		background: #222;
		display: flex;
		align-items: center;
		justify-content: center;
	}

	/* status bar */
	.status {
		height: 31px;
		flex: none;
		background: #141414;
		border-top: 1px solid #333;
		box-sizing: border-box;
		display: flex;
		align-items: center;
		font-size: 14.500px;
		white-space: nowrap;
	}

	.status b {
		font-weight: 700;
		font-size: 15px;
		color: #eee;
	}

	.st-cut {
		width: 34px;
		flex: none;
	}

	.st-acc {
		margin-right: 4px;
	}

	.st-right {
		margin-left: auto;
		display: flex;
		align-items: center;
		height: 100%;
	}

	.notes {
		display: flex;
		align-items: center;
		gap: 3px;
		width: 92px;
	}

	.view {
		width: 56.500px;
		height: 100%;
		display: flex;
		align-items: center;
		justify-content: center;
	}

	.view.active {
		background: #2a2a2a;
	}

	.zoom {
		display: flex;
		align-items: center;
		gap: 6px;
		margin-left: 10px;
		padding-right: 7px;
		color: #d0d0d0;
	}

	.zoom-track {
		position: relative;
		width: 142px;
		height: 1px;
		background: #999;
	}

	.zoom-thumb {
		position: absolute;
		left: 53px;
		top: -8px;
		width: 7px;
		height: 16px;
		background: #aaa;
	}

	.zoom-mark {
		position: absolute;
		left: 71px;
		top: -4px;
		width: 1px;
		height: 9px;
		background: #999;
	}

	.zoom span {
		margin: 0 11px 0 12px;
	}

	/* taskbar */
	.taskbar {
		flex: 1;
		background: #eeedf0;
		display: flex;
		justify-content: space-between;
		align-items: stretch;
		color: #333;
	}

	.apps {
		display: flex;
		padding-left: 8px;
	}

	.app {
		width: 42px;
		margin-right: 10.500px;
		box-sizing: border-box;
		display: flex;
		align-items: center;
		justify-content: center;
		border-bottom: 3px solid transparent;
	}

	.app.active {
		border-bottom-color: #2a75c5;
	}

	.tray {
		display: flex;
		align-items: center;
		padding-right: 35px;
		font-size: 16px;
	}

	.tray svg:nth-child(2) {
		margin-left: 10px;
	}

	.tray svg:nth-child(3) {
		margin-left: 18px;
	}

	.eng {
		margin-left: 19px;
	}

	.tray-t + .tray-t {
		margin-left: 19px;
	}

	.note {
		margin-left: 25px;
	}
</style>
